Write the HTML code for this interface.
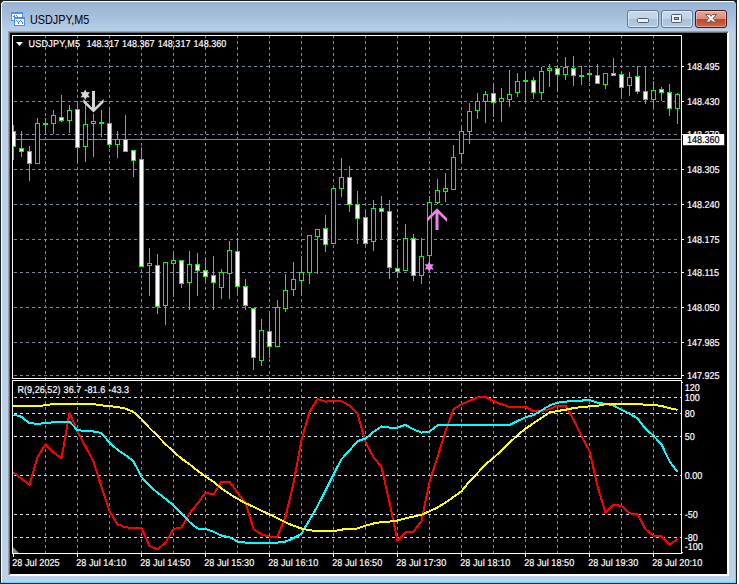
<!DOCTYPE html>
<html lang="en"><head><meta charset="utf-8"><title>USDJPY,M5</title>
<style>
html,body{margin:0;padding:0;background:#fff;}
body{width:739px;height:584px;position:relative;overflow:hidden;font-family:"Liberation Sans",Arial,sans-serif;}
.backdrop{position:absolute;left:0;top:0;width:737px;height:584px;background:#1b1b1b;}
.win{position:absolute;left:0;top:0;width:735px;height:582px;border:1px solid #1b1b1b;border-radius:5px 5px 0 0;background:#b9d1ea;overflow:hidden;}
.win .hl{position:absolute;left:0;top:0;right:0;bottom:0;border-top:1px solid #fff;border-left:1px solid #fff;border-right:1px solid #49e0ff;border-bottom:1px solid #49e0ff;border-radius:4px 4px 0 0;}
.titlebar{position:absolute;left:1px;top:1px;width:733px;height:30px;background:linear-gradient(#98b4d3 0%,#a6c0dd 50%,#b9d1ea 100%);}
.title{position:absolute;left:30.2px;top:13.1px;font-size:12.7px;line-height:14px;color:#000;white-space:nowrap;transform-origin:0 0;transform:scaleX(0.853);}
.client{position:absolute;left:8px;top:31px;width:717px;height:541px;background:#000;border-left:2px solid #a0a0a0;border-top:2px solid #a0a0a0;border-right:2px solid #fff;border-bottom:2px solid #fff;}
.client i{position:absolute;left:-1px;top:-1px;width:718px;height:542px;border-left:1px solid #696969;border-top:1px solid #696969;}
.btn{position:absolute;top:10px;width:30px;height:16px;border:1px solid #5f7590;border-radius:3px;background:linear-gradient(#c7d8ea 0%,#c1d3e7 48%,#a9c1dd 52%,#b4cae2 100%);box-shadow:inset 0 0 0 1px rgba(255,255,255,.55);}
.btn.close{border-color:#43161c;background:linear-gradient(#e9a99b 0%,#dd8b7a 48%,#c2432a 52%,#cf6a4b 100%);box-shadow:inset 0 0 0 1px rgba(255,255,255,.35);}
.btn svg{position:absolute;left:0;top:0;}
svg.chart{position:absolute;left:0;top:0;}
.icon{position:absolute;left:11px;top:12px;}
</style></head><body>
<div class="backdrop"></div>
<div class="win"><div class="titlebar"></div><div class="hl"></div></div>
<svg class="icon" width="16" height="16" viewBox="11 12 16 16" shape-rendering="crispEdges">
<rect x="11" y="12" width="12" height="9" fill="#4d8bf7"/>
<rect x="12" y="14" width="10" height="6" fill="#fff"/>
<path d="M13 16h2v1h-2z M14 15h1v1h-1z M16 15h1v1h-1z M17 16h1v1h-1z M18 17h1v1h-1z" fill="#3f7df0"/>
<rect x="14" y="17" width="11" height="9" fill="#4d8bf7"/>
<rect x="15" y="19" width="9" height="6" fill="#fff"/>
<path d="M16 20h1v1h-1z M17 21h1v1h-1z M18 22h1v2h-1z M19 21h1v1h-1z M20 20h1v1h-1z M21 21h1v1h-1z M22 22h1v2h-1z" fill="#3f7df0"/>
</svg>
<div class="title">USDJPY,M5</div>
<div class="btn" style="left:627px"><svg width="30" height="16" viewBox="0 0 30 16"><rect x="9.5" y="7.5" width="11" height="4" rx="1" fill="#f4f4f4" stroke="#4a5a70"/></svg></div>
<div class="btn" style="left:661px"><svg width="30" height="16" viewBox="0 0 30 16"><rect x="9.5" y="3.5" width="10" height="8" rx="1" fill="#f4f4f4" stroke="#4a5a70"/><rect x="12.5" y="6.5" width="4" height="2" fill="#9fb6d2" stroke="#4a5a70"/></svg></div>
<div class="btn close" style="left:695px"><svg width="30" height="16" viewBox="0 0 30 16"><path d="M9.500 3.500h4l1.500 1.800 1.500-1.800h4l-3.400 3.800 3.400 3.800h-4l-1.500-1.800-1.500 1.800h-4l3.400-3.800z" fill="#f6f6f6" stroke="#6a5358" stroke-width="1" stroke-linejoin="round"/></svg></div>
<div class="client"><i></i></div>
<svg class="chart" width="739" height="584" viewBox="0 0 739 584">
<defs><clipPath id="cm"><rect x="13" y="36" width="668" height="342"/></clipPath><clipPath id="cs"><rect x="13" y="381" width="668" height="172"/></clipPath></defs>
<g stroke="#778899" stroke-width="1" shape-rendering="crispEdges" fill="none">
<line x1="14" y1="66.5" x2="679" y2="66.5" stroke-dasharray="3 3"/>
<line x1="14" y1="101.5" x2="679" y2="101.5" stroke-dasharray="3 3"/>
<line x1="14" y1="134.5" x2="679" y2="134.5" stroke-dasharray="3 3"/>
<line x1="14" y1="169.5" x2="679" y2="169.5" stroke-dasharray="3 3"/>
<line x1="14" y1="204.5" x2="679" y2="204.5" stroke-dasharray="3 3"/>
<line x1="14" y1="239.5" x2="679" y2="239.5" stroke-dasharray="3 3"/>
<line x1="14" y1="272.5" x2="679" y2="272.5" stroke-dasharray="3 3"/>
<line x1="14" y1="307.5" x2="679" y2="307.5" stroke-dasharray="3 3"/>
<line x1="14" y1="342.5" x2="679" y2="342.5" stroke-dasharray="3 3"/>
<line x1="14" y1="375.5" x2="679" y2="375.5" stroke-dasharray="3 3"/>
<line x1="45.5" y1="36" x2="45.5" y2="378" stroke-dasharray="3 3" stroke-dashoffset="1"/>
<line x1="45.5" y1="381" x2="45.5" y2="553" stroke-dasharray="3 3" stroke-dashoffset="4"/>
<line x1="45.5" y1="379" x2="45.5" y2="380"/>
<line x1="77.5" y1="36" x2="77.5" y2="378" stroke-dasharray="3 3" stroke-dashoffset="1"/>
<line x1="77.5" y1="381" x2="77.5" y2="553" stroke-dasharray="3 3" stroke-dashoffset="4"/>
<line x1="77.5" y1="379" x2="77.5" y2="380"/>
<line x1="109.5" y1="36" x2="109.5" y2="378" stroke-dasharray="3 3" stroke-dashoffset="1"/>
<line x1="109.5" y1="381" x2="109.5" y2="553" stroke-dasharray="3 3" stroke-dashoffset="4"/>
<line x1="109.5" y1="379" x2="109.5" y2="380"/>
<line x1="141.5" y1="36" x2="141.5" y2="378" stroke-dasharray="3 3" stroke-dashoffset="1"/>
<line x1="141.5" y1="381" x2="141.5" y2="553" stroke-dasharray="3 3" stroke-dashoffset="4"/>
<line x1="141.5" y1="379" x2="141.5" y2="380"/>
<line x1="173.5" y1="36" x2="173.5" y2="378" stroke-dasharray="3 3" stroke-dashoffset="1"/>
<line x1="173.5" y1="381" x2="173.5" y2="553" stroke-dasharray="3 3" stroke-dashoffset="4"/>
<line x1="173.5" y1="379" x2="173.5" y2="380"/>
<line x1="205.5" y1="36" x2="205.5" y2="378" stroke-dasharray="3 3" stroke-dashoffset="1"/>
<line x1="205.5" y1="381" x2="205.5" y2="553" stroke-dasharray="3 3" stroke-dashoffset="4"/>
<line x1="205.5" y1="379" x2="205.5" y2="380"/>
<line x1="237.5" y1="36" x2="237.5" y2="378" stroke-dasharray="3 3" stroke-dashoffset="1"/>
<line x1="237.5" y1="381" x2="237.5" y2="553" stroke-dasharray="3 3" stroke-dashoffset="4"/>
<line x1="237.5" y1="379" x2="237.5" y2="380"/>
<line x1="269.5" y1="36" x2="269.5" y2="378" stroke-dasharray="3 3" stroke-dashoffset="1"/>
<line x1="269.5" y1="381" x2="269.5" y2="553" stroke-dasharray="3 3" stroke-dashoffset="4"/>
<line x1="269.5" y1="379" x2="269.5" y2="380"/>
<line x1="301.5" y1="36" x2="301.5" y2="378" stroke-dasharray="3 3" stroke-dashoffset="1"/>
<line x1="301.5" y1="381" x2="301.5" y2="553" stroke-dasharray="3 3" stroke-dashoffset="4"/>
<line x1="301.5" y1="379" x2="301.5" y2="380"/>
<line x1="333.5" y1="36" x2="333.5" y2="378" stroke-dasharray="3 3" stroke-dashoffset="1"/>
<line x1="333.5" y1="381" x2="333.5" y2="553" stroke-dasharray="3 3" stroke-dashoffset="4"/>
<line x1="333.5" y1="379" x2="333.5" y2="380"/>
<line x1="365.5" y1="36" x2="365.5" y2="378" stroke-dasharray="3 3" stroke-dashoffset="1"/>
<line x1="365.5" y1="381" x2="365.5" y2="553" stroke-dasharray="3 3" stroke-dashoffset="4"/>
<line x1="365.5" y1="379" x2="365.5" y2="380"/>
<line x1="397.5" y1="36" x2="397.5" y2="378" stroke-dasharray="3 3" stroke-dashoffset="1"/>
<line x1="397.5" y1="381" x2="397.5" y2="553" stroke-dasharray="3 3" stroke-dashoffset="4"/>
<line x1="397.5" y1="379" x2="397.5" y2="380"/>
<line x1="429.5" y1="36" x2="429.5" y2="378" stroke-dasharray="3 3" stroke-dashoffset="1"/>
<line x1="429.5" y1="381" x2="429.5" y2="553" stroke-dasharray="3 3" stroke-dashoffset="4"/>
<line x1="429.5" y1="379" x2="429.5" y2="380"/>
<line x1="461.5" y1="36" x2="461.5" y2="378" stroke-dasharray="3 3" stroke-dashoffset="1"/>
<line x1="461.5" y1="381" x2="461.5" y2="553" stroke-dasharray="3 3" stroke-dashoffset="4"/>
<line x1="461.5" y1="379" x2="461.5" y2="380"/>
<line x1="493.5" y1="36" x2="493.5" y2="378" stroke-dasharray="3 3" stroke-dashoffset="1"/>
<line x1="493.5" y1="381" x2="493.5" y2="553" stroke-dasharray="3 3" stroke-dashoffset="4"/>
<line x1="493.5" y1="379" x2="493.5" y2="380"/>
<line x1="525.5" y1="36" x2="525.5" y2="378" stroke-dasharray="3 3" stroke-dashoffset="1"/>
<line x1="525.5" y1="381" x2="525.5" y2="553" stroke-dasharray="3 3" stroke-dashoffset="4"/>
<line x1="525.5" y1="379" x2="525.5" y2="380"/>
<line x1="557.5" y1="36" x2="557.5" y2="378" stroke-dasharray="3 3" stroke-dashoffset="1"/>
<line x1="557.5" y1="381" x2="557.5" y2="553" stroke-dasharray="3 3" stroke-dashoffset="4"/>
<line x1="557.5" y1="379" x2="557.5" y2="380"/>
<line x1="589.5" y1="36" x2="589.5" y2="378" stroke-dasharray="3 3" stroke-dashoffset="1"/>
<line x1="589.5" y1="381" x2="589.5" y2="553" stroke-dasharray="3 3" stroke-dashoffset="4"/>
<line x1="589.5" y1="379" x2="589.5" y2="380"/>
<line x1="621.5" y1="36" x2="621.5" y2="378" stroke-dasharray="3 3" stroke-dashoffset="1"/>
<line x1="621.5" y1="381" x2="621.5" y2="553" stroke-dasharray="3 3" stroke-dashoffset="4"/>
<line x1="621.5" y1="379" x2="621.5" y2="380"/>
<line x1="653.5" y1="36" x2="653.5" y2="378" stroke-dasharray="3 3" stroke-dashoffset="1"/>
<line x1="653.5" y1="381" x2="653.5" y2="553" stroke-dasharray="3 3" stroke-dashoffset="4"/>
<line x1="653.5" y1="379" x2="653.5" y2="380"/>
<line x1="14" y1="397.5" x2="681" y2="397.5" stroke-dasharray="3 3" stroke="#dcdcdc"/>
<line x1="14" y1="413.5" x2="681" y2="413.5" stroke-dasharray="3 3" stroke="#dcdcdc"/>
<line x1="14" y1="436.5" x2="681" y2="436.5" stroke-dasharray="3 3" stroke="#dcdcdc"/>
<line x1="14" y1="475.5" x2="681" y2="475.5" stroke-dasharray="3 3" stroke="#dcdcdc"/>
<line x1="14" y1="514.5" x2="681" y2="514.5" stroke-dasharray="3 3" stroke="#dcdcdc"/>
<line x1="14" y1="537.5" x2="681" y2="537.5" stroke-dasharray="3 3" stroke="#dcdcdc"/>
<line x1="13" y1="139.5" x2="682" y2="139.5"/>
</g>
<g clip-path="url(#cm)" shape-rendering="crispEdges">
<rect x="13" y="125" width="1" height="35" fill="#00ff00"/>
<rect x="11" y="131" width="5" height="16" fill="#00ff00"/>
<rect x="12" y="132" width="3" height="14" fill="#fff"/>
<rect x="21" y="131" width="1" height="26" fill="#00ff00"/>
<rect x="19" y="148" width="5" height="4" fill="#00ff00"/>
<rect x="20" y="149" width="3" height="2" fill="#fff"/>
<rect x="29" y="146" width="1" height="35" fill="#00ff00"/>
<rect x="27" y="151" width="5" height="13" fill="#00ff00"/>
<rect x="28" y="152" width="3" height="11" fill="#fff"/>
<rect x="37" y="118" width="1" height="46" fill="#00ff00"/>
<rect x="35" y="123" width="5" height="41" fill="#00ff00"/>
<rect x="36" y="124" width="3" height="39" fill="#000"/>
<rect x="45" y="118" width="1" height="16" fill="#00ff00"/>
<rect x="43" y="123" width="5" height="2" fill="#00ff00"/>
<rect x="53" y="110" width="1" height="24" fill="#00ff00"/>
<rect x="51" y="115" width="5" height="9" fill="#00ff00"/>
<rect x="52" y="116" width="3" height="7" fill="#000"/>
<rect x="61" y="95" width="1" height="27" fill="#00ff00"/>
<rect x="59" y="117" width="5" height="4" fill="#00ff00"/>
<rect x="60" y="118" width="3" height="2" fill="#fff"/>
<rect x="69" y="105" width="1" height="28" fill="#00ff00"/>
<rect x="67" y="110" width="5" height="11" fill="#00ff00"/>
<rect x="68" y="111" width="3" height="9" fill="#000"/>
<rect x="77" y="104" width="1" height="58" fill="#00ff00"/>
<rect x="75" y="109" width="5" height="39" fill="#00ff00"/>
<rect x="76" y="110" width="3" height="37" fill="#fff"/>
<rect x="85" y="101" width="1" height="61" fill="#00ff00"/>
<rect x="83" y="124" width="5" height="23" fill="#00ff00"/>
<rect x="84" y="125" width="3" height="21" fill="#000"/>
<rect x="93" y="114" width="1" height="43" fill="#00ff00"/>
<rect x="91" y="121" width="5" height="3" fill="#00ff00"/>
<rect x="92" y="122" width="3" height="1" fill="#000"/>
<rect x="101" y="110" width="1" height="27" fill="#00ff00"/>
<rect x="99" y="122" width="5" height="2" fill="#00ff00"/>
<rect x="109" y="107" width="1" height="41" fill="#00ff00"/>
<rect x="107" y="123" width="5" height="22" fill="#00ff00"/>
<rect x="108" y="124" width="3" height="20" fill="#fff"/>
<rect x="117" y="131" width="1" height="27" fill="#00ff00"/>
<rect x="115" y="139" width="5" height="6" fill="#00ff00"/>
<rect x="116" y="140" width="3" height="4" fill="#000"/>
<rect x="125" y="115" width="1" height="37" fill="#00ff00"/>
<rect x="123" y="139" width="5" height="13" fill="#00ff00"/>
<rect x="124" y="140" width="3" height="11" fill="#fff"/>
<rect x="133" y="150" width="1" height="27" fill="#00ff00"/>
<rect x="131" y="150" width="5" height="11" fill="#00ff00"/>
<rect x="132" y="151" width="3" height="9" fill="#fff"/>
<rect x="141" y="147" width="1" height="120" fill="#00ff00"/>
<rect x="139" y="159" width="5" height="108" fill="#00ff00"/>
<rect x="140" y="160" width="3" height="106" fill="#fff"/>
<rect x="149" y="248" width="1" height="48" fill="#00ff00"/>
<rect x="147" y="263" width="5" height="3" fill="#00ff00"/>
<rect x="148" y="264" width="3" height="1" fill="#000"/>
<rect x="157" y="254" width="1" height="60" fill="#00ff00"/>
<rect x="155" y="265" width="5" height="42" fill="#00ff00"/>
<rect x="156" y="266" width="3" height="40" fill="#fff"/>
<rect x="165" y="262" width="1" height="63" fill="#00ff00"/>
<rect x="163" y="262" width="5" height="44" fill="#00ff00"/>
<rect x="164" y="263" width="3" height="42" fill="#000"/>
<rect x="173" y="254" width="1" height="43" fill="#00ff00"/>
<rect x="171" y="260" width="5" height="4" fill="#00ff00"/>
<rect x="172" y="261" width="3" height="2" fill="#000"/>
<rect x="181" y="260" width="1" height="28" fill="#00ff00"/>
<rect x="179" y="260" width="5" height="24" fill="#00ff00"/>
<rect x="180" y="261" width="3" height="22" fill="#fff"/>
<rect x="189" y="251" width="1" height="59" fill="#00ff00"/>
<rect x="187" y="264" width="5" height="19" fill="#00ff00"/>
<rect x="188" y="265" width="3" height="17" fill="#000"/>
<rect x="197" y="253" width="1" height="43" fill="#00ff00"/>
<rect x="195" y="264" width="5" height="7" fill="#00ff00"/>
<rect x="196" y="265" width="3" height="5" fill="#fff"/>
<rect x="205" y="258" width="1" height="23" fill="#00ff00"/>
<rect x="203" y="270" width="5" height="7" fill="#00ff00"/>
<rect x="204" y="271" width="3" height="5" fill="#fff"/>
<rect x="213" y="256" width="1" height="54" fill="#00ff00"/>
<rect x="211" y="275" width="5" height="8" fill="#00ff00"/>
<rect x="212" y="276" width="3" height="6" fill="#fff"/>
<rect x="221" y="269" width="1" height="30" fill="#00ff00"/>
<rect x="219" y="272" width="5" height="16" fill="#00ff00"/>
<rect x="220" y="273" width="3" height="14" fill="#000"/>
<rect x="229" y="241" width="1" height="58" fill="#00ff00"/>
<rect x="227" y="250" width="5" height="24" fill="#00ff00"/>
<rect x="228" y="251" width="3" height="22" fill="#000"/>
<rect x="237" y="238" width="1" height="55" fill="#00ff00"/>
<rect x="235" y="251" width="5" height="36" fill="#00ff00"/>
<rect x="236" y="252" width="3" height="34" fill="#fff"/>
<rect x="245" y="279" width="1" height="31" fill="#00ff00"/>
<rect x="243" y="286" width="5" height="20" fill="#00ff00"/>
<rect x="244" y="287" width="3" height="18" fill="#fff"/>
<rect x="253" y="308" width="1" height="62" fill="#00ff00"/>
<rect x="251" y="308" width="5" height="50" fill="#00ff00"/>
<rect x="252" y="309" width="3" height="48" fill="#fff"/>
<rect x="261" y="319" width="1" height="47" fill="#00ff00"/>
<rect x="259" y="330" width="5" height="31" fill="#00ff00"/>
<rect x="260" y="331" width="3" height="29" fill="#000"/>
<rect x="269" y="314" width="1" height="44" fill="#00ff00"/>
<rect x="267" y="331" width="5" height="16" fill="#00ff00"/>
<rect x="268" y="332" width="3" height="14" fill="#fff"/>
<rect x="277" y="300" width="1" height="47" fill="#00ff00"/>
<rect x="275" y="307" width="5" height="40" fill="#00ff00"/>
<rect x="276" y="308" width="3" height="38" fill="#000"/>
<rect x="285" y="274" width="1" height="38" fill="#00ff00"/>
<rect x="283" y="290" width="5" height="19" fill="#00ff00"/>
<rect x="284" y="291" width="3" height="17" fill="#000"/>
<rect x="293" y="262" width="1" height="34" fill="#00ff00"/>
<rect x="291" y="279" width="5" height="11" fill="#00ff00"/>
<rect x="292" y="280" width="3" height="9" fill="#000"/>
<rect x="301" y="256" width="1" height="40" fill="#00ff00"/>
<rect x="299" y="272" width="5" height="9" fill="#00ff00"/>
<rect x="300" y="273" width="3" height="7" fill="#000"/>
<rect x="309" y="235" width="1" height="49" fill="#00ff00"/>
<rect x="307" y="235" width="5" height="38" fill="#00ff00"/>
<rect x="308" y="236" width="3" height="36" fill="#000"/>
<rect x="317" y="229" width="1" height="45" fill="#00ff00"/>
<rect x="315" y="229" width="5" height="8" fill="#00ff00"/>
<rect x="316" y="230" width="3" height="6" fill="#000"/>
<rect x="325" y="215" width="1" height="37" fill="#00ff00"/>
<rect x="323" y="228" width="5" height="17" fill="#00ff00"/>
<rect x="324" y="229" width="3" height="15" fill="#fff"/>
<rect x="333" y="188" width="1" height="56" fill="#00ff00"/>
<rect x="331" y="188" width="5" height="56" fill="#00ff00"/>
<rect x="332" y="189" width="3" height="54" fill="#000"/>
<rect x="341" y="158" width="1" height="39" fill="#00ff00"/>
<rect x="339" y="177" width="5" height="12" fill="#00ff00"/>
<rect x="340" y="178" width="3" height="10" fill="#000"/>
<rect x="349" y="166" width="1" height="46" fill="#00ff00"/>
<rect x="347" y="177" width="5" height="28" fill="#00ff00"/>
<rect x="348" y="178" width="3" height="26" fill="#fff"/>
<rect x="357" y="191" width="1" height="53" fill="#00ff00"/>
<rect x="355" y="204" width="5" height="15" fill="#00ff00"/>
<rect x="356" y="205" width="3" height="13" fill="#fff"/>
<rect x="365" y="211" width="1" height="34" fill="#00ff00"/>
<rect x="363" y="217" width="5" height="27" fill="#00ff00"/>
<rect x="364" y="218" width="3" height="25" fill="#fff"/>
<rect x="373" y="200" width="1" height="51" fill="#00ff00"/>
<rect x="371" y="208" width="5" height="34" fill="#00ff00"/>
<rect x="372" y="209" width="3" height="32" fill="#000"/>
<rect x="381" y="196" width="1" height="43" fill="#00ff00"/>
<rect x="379" y="208" width="5" height="4" fill="#00ff00"/>
<rect x="380" y="209" width="3" height="2" fill="#fff"/>
<rect x="389" y="200" width="1" height="79" fill="#00ff00"/>
<rect x="387" y="211" width="5" height="57" fill="#00ff00"/>
<rect x="388" y="212" width="3" height="55" fill="#fff"/>
<rect x="397" y="249" width="1" height="29" fill="#00ff00"/>
<rect x="395" y="268" width="5" height="4" fill="#00ff00"/>
<rect x="396" y="269" width="3" height="2" fill="#fff"/>
<rect x="405" y="224" width="1" height="47" fill="#00ff00"/>
<rect x="403" y="238" width="5" height="33" fill="#00ff00"/>
<rect x="404" y="239" width="3" height="31" fill="#000"/>
<rect x="413" y="234" width="1" height="47" fill="#00ff00"/>
<rect x="411" y="238" width="5" height="38" fill="#00ff00"/>
<rect x="412" y="239" width="3" height="36" fill="#fff"/>
<rect x="421" y="238" width="1" height="46" fill="#00ff00"/>
<rect x="419" y="256" width="5" height="20" fill="#00ff00"/>
<rect x="420" y="257" width="3" height="18" fill="#000"/>
<rect x="429" y="196" width="1" height="67" fill="#00ff00"/>
<rect x="427" y="202" width="5" height="54" fill="#00ff00"/>
<rect x="428" y="203" width="3" height="52" fill="#000"/>
<rect x="437" y="179" width="1" height="25" fill="#00ff00"/>
<rect x="435" y="190" width="5" height="13" fill="#00ff00"/>
<rect x="436" y="191" width="3" height="11" fill="#000"/>
<rect x="445" y="173" width="1" height="29" fill="#00ff00"/>
<rect x="443" y="188" width="5" height="4" fill="#00ff00"/>
<rect x="444" y="189" width="3" height="2" fill="#000"/>
<rect x="453" y="145" width="1" height="45" fill="#00ff00"/>
<rect x="451" y="157" width="5" height="33" fill="#00ff00"/>
<rect x="452" y="158" width="3" height="31" fill="#000"/>
<rect x="461" y="127" width="1" height="34" fill="#00ff00"/>
<rect x="459" y="131" width="5" height="23" fill="#00ff00"/>
<rect x="460" y="132" width="3" height="21" fill="#000"/>
<rect x="469" y="103" width="1" height="41" fill="#00ff00"/>
<rect x="467" y="111" width="5" height="21" fill="#00ff00"/>
<rect x="468" y="112" width="3" height="19" fill="#000"/>
<rect x="477" y="93" width="1" height="26" fill="#00ff00"/>
<rect x="475" y="101" width="5" height="10" fill="#00ff00"/>
<rect x="476" y="102" width="3" height="8" fill="#000"/>
<rect x="485" y="91" width="1" height="32" fill="#00ff00"/>
<rect x="483" y="94" width="5" height="8" fill="#00ff00"/>
<rect x="484" y="95" width="3" height="6" fill="#000"/>
<rect x="493" y="84" width="1" height="33" fill="#00ff00"/>
<rect x="491" y="93" width="5" height="10" fill="#00ff00"/>
<rect x="492" y="94" width="3" height="8" fill="#fff"/>
<rect x="501" y="88" width="1" height="34" fill="#00ff00"/>
<rect x="499" y="98" width="5" height="4" fill="#00ff00"/>
<rect x="500" y="99" width="3" height="2" fill="#000"/>
<rect x="509" y="70" width="1" height="37" fill="#00ff00"/>
<rect x="507" y="94" width="5" height="6" fill="#00ff00"/>
<rect x="508" y="95" width="3" height="4" fill="#000"/>
<rect x="517" y="73" width="1" height="24" fill="#00ff00"/>
<rect x="515" y="81" width="5" height="12" fill="#00ff00"/>
<rect x="516" y="82" width="3" height="10" fill="#000"/>
<rect x="525" y="73" width="1" height="29" fill="#00ff00"/>
<rect x="523" y="80" width="5" height="2" fill="#00ff00"/>
<rect x="533" y="77" width="1" height="22" fill="#00ff00"/>
<rect x="531" y="80" width="5" height="13" fill="#00ff00"/>
<rect x="532" y="81" width="3" height="11" fill="#fff"/>
<rect x="541" y="67" width="1" height="33" fill="#00ff00"/>
<rect x="539" y="71" width="5" height="22" fill="#00ff00"/>
<rect x="540" y="72" width="3" height="20" fill="#000"/>
<rect x="549" y="64" width="1" height="23" fill="#00ff00"/>
<rect x="547" y="68" width="5" height="3" fill="#00ff00"/>
<rect x="548" y="69" width="3" height="1" fill="#000"/>
<rect x="557" y="65" width="1" height="27" fill="#00ff00"/>
<rect x="555" y="68" width="5" height="7" fill="#00ff00"/>
<rect x="556" y="69" width="3" height="5" fill="#fff"/>
<rect x="565" y="57" width="1" height="23" fill="#00ff00"/>
<rect x="563" y="67" width="5" height="8" fill="#00ff00"/>
<rect x="564" y="68" width="3" height="6" fill="#000"/>
<rect x="573" y="56" width="1" height="30" fill="#00ff00"/>
<rect x="571" y="68" width="5" height="8" fill="#00ff00"/>
<rect x="572" y="69" width="3" height="6" fill="#fff"/>
<rect x="581" y="66" width="1" height="19" fill="#00ff00"/>
<rect x="579" y="75" width="5" height="2" fill="#00ff00"/>
<rect x="589" y="69" width="1" height="13" fill="#00ff00"/>
<rect x="587" y="73" width="5" height="2" fill="#00ff00"/>
<rect x="597" y="64" width="1" height="20" fill="#00ff00"/>
<rect x="595" y="75" width="5" height="9" fill="#00ff00"/>
<rect x="596" y="76" width="3" height="7" fill="#fff"/>
<rect x="605" y="73" width="1" height="16" fill="#00ff00"/>
<rect x="603" y="73" width="5" height="12" fill="#00ff00"/>
<rect x="604" y="74" width="3" height="10" fill="#000"/>
<rect x="613" y="58" width="1" height="18" fill="#00ff00"/>
<rect x="611" y="73" width="5" height="3" fill="#00ff00"/>
<rect x="612" y="74" width="3" height="1" fill="#fff"/>
<rect x="621" y="71" width="1" height="28" fill="#00ff00"/>
<rect x="619" y="74" width="5" height="14" fill="#00ff00"/>
<rect x="620" y="75" width="3" height="12" fill="#fff"/>
<rect x="629" y="72" width="1" height="24" fill="#00ff00"/>
<rect x="627" y="77" width="5" height="9" fill="#00ff00"/>
<rect x="628" y="78" width="3" height="7" fill="#000"/>
<rect x="637" y="66" width="1" height="28" fill="#00ff00"/>
<rect x="635" y="76" width="5" height="16" fill="#00ff00"/>
<rect x="636" y="77" width="3" height="14" fill="#fff"/>
<rect x="645" y="67" width="1" height="37" fill="#00ff00"/>
<rect x="643" y="91" width="5" height="9" fill="#00ff00"/>
<rect x="644" y="92" width="3" height="7" fill="#fff"/>
<rect x="653" y="81" width="1" height="27" fill="#00ff00"/>
<rect x="651" y="90" width="5" height="10" fill="#00ff00"/>
<rect x="652" y="91" width="3" height="8" fill="#000"/>
<rect x="661" y="87" width="1" height="14" fill="#00ff00"/>
<rect x="659" y="89" width="5" height="4" fill="#00ff00"/>
<rect x="660" y="90" width="3" height="2" fill="#fff"/>
<rect x="669" y="84" width="1" height="32" fill="#00ff00"/>
<rect x="667" y="92" width="5" height="17" fill="#00ff00"/>
<rect x="668" y="93" width="3" height="15" fill="#fff"/>
<rect x="677" y="93" width="1" height="31" fill="#00ff00"/>
<rect x="675" y="94" width="5" height="15" fill="#00ff00"/>
<rect x="676" y="95" width="3" height="13" fill="#000"/>
</g>
<g clip-path="url(#cs)">
<polyline points="13.5,472.4 21.5,478.6 29.5,484.9 37.5,457.0 45.5,444.5 53.5,452.6 61.5,458.0 69.5,412.9 77.5,431.5 85.5,446.5 93.5,461.5 101.5,486.8 109.5,511.2 117.5,524.2 125.5,527.4 133.5,527.8 141.5,527.8 149.5,545.8 157.5,549.5 165.5,542.6 173.5,529.1 181.5,527.4 189.5,513.3 197.5,503.6 205.5,492.8 213.5,494.5 221.5,481.5 229.5,481.5 237.5,492.8 245.5,502.5 253.5,529.1 261.5,534.3 269.5,536.7 277.5,536.7 285.5,516.6 293.5,483.5 301.5,440.0 309.5,412.0 317.5,399.0 325.5,401.6 333.5,401.2 341.5,401.2 349.5,405.5 357.5,413.5 365.5,442.3 373.5,457.0 381.5,467.0 389.5,502.5 397.5,540.8 405.5,532.2 413.5,531.7 421.5,520.9 429.5,482.0 437.5,457.0 445.5,431.0 453.5,409.2 461.5,404.2 469.5,401.0 477.5,397.3 485.5,396.9 493.5,401.2 501.5,404.2 509.5,407.0 517.5,407.0 525.5,407.0 533.5,411.0 541.5,411.0 549.5,409.2 557.5,405.5 565.5,405.5 573.5,419.5 581.5,436.2 589.5,451.0 597.5,486.0 605.5,512.9 613.5,504.7 621.5,506.0 629.5,513.4 637.5,514.0 645.5,529.2 653.5,535.7 661.5,536.1 669.5,544.8 677.5,538.9" fill="none" stroke="#ff0000" stroke-width="2" stroke-linejoin="round" stroke-linecap="butt" shape-rendering="crispEdges"/>
<polyline points="13.5,414.6 21.5,416.8 29.5,423.3 37.5,423.7 45.5,423.3 53.5,422.2 61.5,421.8 69.5,421.8 77.5,430.2 85.5,430.9 93.5,431.5 101.5,433.0 109.5,442.7 117.5,449.8 125.5,455.1 133.5,461.3 141.5,477.0 149.5,485.9 157.5,492.7 165.5,498.8 173.5,505.3 181.5,513.3 189.5,522.0 197.5,528.5 205.5,529.1 213.5,531.7 221.5,535.6 229.5,537.1 237.5,541.5 245.5,542.6 253.5,542.6 261.5,542.6 269.5,542.6 277.5,542.6 285.5,541.5 293.5,538.2 301.5,533.7 309.5,519.8 317.5,506.2 325.5,490.5 333.5,474.3 341.5,459.1 349.5,450.4 357.5,441.2 365.5,438.5 373.5,431.9 381.5,426.5 389.5,427.6 397.5,427.6 405.5,424.8 413.5,429.4 421.5,432.6 429.5,431.5 437.5,425.5 445.5,425.0 453.5,425.0 461.5,425.0 469.5,425.0 477.5,425.0 485.5,425.0 493.5,425.0 501.5,425.0 509.5,425.0 517.5,421.1 525.5,417.2 533.5,415.1 541.5,410.3 549.5,405.5 557.5,402.7 565.5,401.6 573.5,401.0 581.5,400.6 589.5,399.9 597.5,402.7 605.5,403.8 613.5,405.5 621.5,409.9 629.5,413.5 637.5,418.5 645.5,428.7 653.5,435.8 661.5,444.5 669.5,461.2 677.5,472.0" fill="none" stroke="#00ffff" stroke-width="2" stroke-linejoin="round" stroke-linecap="butt" shape-rendering="crispEdges"/>
<polyline points="13.5,406.4 21.5,406.0 29.5,406.0 37.5,406.0 45.5,405.3 53.5,404.0 61.5,403.8 69.5,403.8 77.5,403.8 85.5,403.8 93.5,404.2 101.5,405.3 109.5,406.2 117.5,407.0 125.5,408.6 133.5,412.0 141.5,419.0 149.5,428.0 157.5,435.8 165.5,444.2 173.5,451.6 181.5,458.6 189.5,464.2 197.5,470.7 205.5,476.5 213.5,481.9 221.5,488.4 229.5,493.9 237.5,498.8 245.5,503.2 253.5,506.8 261.5,510.7 269.5,514.4 277.5,518.3 285.5,522.4 293.5,525.7 301.5,528.5 309.5,530.3 317.5,531.0 325.5,531.1 333.5,531.1 341.5,529.6 349.5,528.9 357.5,528.5 365.5,525.7 373.5,523.5 381.5,522.0 389.5,521.6 397.5,520.5 405.5,518.3 413.5,516.6 421.5,514.8 429.5,511.2 437.5,507.5 445.5,502.5 453.5,497.0 461.5,491.2 469.5,481.3 477.5,473.1 485.5,464.4 493.5,457.9 501.5,450.3 509.5,442.8 517.5,435.2 525.5,428.7 533.5,423.3 541.5,417.9 549.5,412.5 557.5,411.0 565.5,409.7 573.5,408.1 581.5,407.0 589.5,406.4 597.5,405.8 605.5,404.2 613.5,403.8 621.5,403.8 629.5,403.8 637.5,403.8 645.5,404.9 653.5,404.9 661.5,406.0 669.5,408.1 677.5,409.9" fill="none" stroke="#ffff00" stroke-width="2" stroke-linejoin="round" stroke-linecap="butt" shape-rendering="crispEdges"/>
</g>
<g fill="none" stroke="#fff" stroke-width="1" shape-rendering="crispEdges">
<rect x="12.5" y="35.5" width="669" height="343"/>
<path d="M12.5 553.5V380.5H681.5V553.5 M12 553.5H682 M682 552.5H683"/>
<line x1="682" y1="66.5" x2="684" y2="66.5"/>
<line x1="682" y1="101.5" x2="684" y2="101.5"/>
<line x1="682" y1="134.5" x2="684" y2="134.5"/>
<line x1="682" y1="169.5" x2="684" y2="169.5"/>
<line x1="682" y1="204.5" x2="684" y2="204.5"/>
<line x1="682" y1="239.5" x2="684" y2="239.5"/>
<line x1="682" y1="272.5" x2="684" y2="272.5"/>
<line x1="682" y1="307.5" x2="684" y2="307.5"/>
<line x1="682" y1="342.5" x2="684" y2="342.5"/>
<line x1="682" y1="375.5" x2="684" y2="375.5"/>
<line x1="682" y1="382.5" x2="683" y2="382.5"/>
<line x1="13.5" y1="554" x2="13.5" y2="557"/>
<line x1="77.5" y1="554" x2="77.5" y2="557"/>
<line x1="141.5" y1="554" x2="141.5" y2="557"/>
<line x1="205.5" y1="554" x2="205.5" y2="557"/>
<line x1="269.5" y1="554" x2="269.5" y2="557"/>
<line x1="333.5" y1="554" x2="333.5" y2="557"/>
<line x1="397.5" y1="554" x2="397.5" y2="557"/>
<line x1="461.5" y1="554" x2="461.5" y2="557"/>
<line x1="525.5" y1="554" x2="525.5" y2="557"/>
<line x1="589.5" y1="554" x2="589.5" y2="557"/>
<line x1="653.5" y1="554" x2="653.5" y2="557"/>
</g>
<path d="M13 547V553H19Z" fill="#778899"/>
<path d="M93.5 112.5L83.3 102.6V99L92 107.6V91H95V107.6L103.6 99V102.6Z" fill="#d8d8d8"/>
<path d="M437 208.2L447 218.2V222L438.5 213.5V230H435.5V213.5L427 222V218.2Z" fill="#ee82ee"/>
<polygon points="85.2,89.5 86.7,92.3 89.8,92.1 88.1,94.8 89.8,97.5 86.7,97.3 85.2,100.1 83.8,97.3 80.6,97.5 82.3,94.8 80.6,92.1 83.8,92.3" fill="#d8d8d8"/>
<polygon points="429.2,261.5 430.6,264.3 433.8,264.2 432.1,266.8 433.8,269.4 430.6,269.3 429.2,272.1 427.8,269.3 424.6,269.4 426.3,266.8 424.6,264.2 427.8,264.3" fill="#ee82ee"/>
<rect x="683" y="134" width="41" height="11" fill="#fff" shape-rendering="crispEdges"/>
<rect x="682" y="134" width="1" height="1" fill="#fff" shape-rendering="crispEdges"/>
<g font-family="&quot;Liberation Sans&quot;, Arial, sans-serif" font-size="10.0" fill="#fff" stroke="#fff" stroke-width="0.2">
<text transform="translate(687 70) rotate(0.05) scale(0.9050 1)">148.495</text>
<text transform="translate(687 105) rotate(0.05) scale(0.9050 1)">148.430</text>
<text transform="translate(687 138) rotate(0.05) scale(0.9050 1)">148.370</text>
<text transform="translate(687 173) rotate(0.05) scale(0.9050 1)">148.305</text>
<text transform="translate(687 208) rotate(0.05) scale(0.9050 1)">148.240</text>
<text transform="translate(687 243) rotate(0.05) scale(0.9050 1)">148.175</text>
<text transform="translate(687 276) rotate(0.05) scale(0.9050 1)">148.115</text>
<text transform="translate(687 311) rotate(0.05) scale(0.9050 1)">148.050</text>
<text transform="translate(687 346) rotate(0.05) scale(0.9050 1)">147.985</text>
<text transform="translate(687 379) rotate(0.05) scale(0.9050 1)">147.925</text>
<rect x="683" y="134" width="41" height="11" fill="#fff" shape-rendering="crispEdges"/>
<text transform="translate(687 143) rotate(0.05) scale(0.9050 1)" fill="#000" stroke="#000">148.360</text>
<text transform="translate(684.8 391) rotate(0.05) scale(0.9050 1)">120</text>
<text transform="translate(684.8 401) rotate(0.05) scale(0.9050 1)">100</text>
<text transform="translate(684.8 417) rotate(0.05) scale(0.9050 1)">80</text>
<text transform="translate(684.8 440) rotate(0.05) scale(0.9050 1)">50</text>
<text transform="translate(684.8 479) rotate(0.05) scale(0.9050 1)">0.00</text>
<text transform="translate(684.8 518) rotate(0.05) scale(0.9050 1)">-50</text>
<text transform="translate(684.8 541) rotate(0.05) scale(0.9050 1)">-80</text>
<text transform="translate(684.8 550) rotate(0.05) scale(0.9050 1)">-100</text>
<text transform="translate(28.4 47) rotate(0.05) scale(0.9050 1)" letter-spacing="0.3">USDJPY,M5</text>
<text transform="translate(86.4 47) rotate(0.05) scale(0.9050 1)">148.317</text>
<text transform="translate(122 47) rotate(0.05) scale(0.9050 1)">148.367</text>
<text transform="translate(157.8 47) rotate(0.05) scale(0.9050 1)">148.317</text>
<text transform="translate(193.6 47) rotate(0.05) scale(0.9050 1)">148.360</text>
<text transform="translate(17.4 393) rotate(0.05) scale(0.9050 1)" word-spacing="0.6" letter-spacing="0.05">R(9,26,52) 36.7 -81.6 -43.3</text>
<text transform="translate(12.2 566) rotate(0.05) scale(0.9050 1)" letter-spacing="0.08">28 Jul 2025</text>
<text transform="translate(76.2 566) rotate(0.05) scale(0.9050 1)" letter-spacing="0.08">28 Jul 14:10</text>
<text transform="translate(140.2 566) rotate(0.05) scale(0.9050 1)" letter-spacing="0.08">28 Jul 14:50</text>
<text transform="translate(204.2 566) rotate(0.05) scale(0.9050 1)" letter-spacing="0.08">28 Jul 15:30</text>
<text transform="translate(268.2 566) rotate(0.05) scale(0.9050 1)" letter-spacing="0.08">28 Jul 16:10</text>
<text transform="translate(332.2 566) rotate(0.05) scale(0.9050 1)" letter-spacing="0.08">28 Jul 16:50</text>
<text transform="translate(396.2 566) rotate(0.05) scale(0.9050 1)" letter-spacing="0.08">28 Jul 17:30</text>
<text transform="translate(460.2 566) rotate(0.05) scale(0.9050 1)" letter-spacing="0.08">28 Jul 18:10</text>
<text transform="translate(524.2 566) rotate(0.05) scale(0.9050 1)" letter-spacing="0.08">28 Jul 18:50</text>
<text transform="translate(588.2 566) rotate(0.05) scale(0.9050 1)" letter-spacing="0.08">28 Jul 19:30</text>
<text transform="translate(652.2 566) rotate(0.05) scale(0.9050 1)" letter-spacing="0.08">28 Jul 20:10</text>
</g>
<path d="M16 42H23L19.5 46Z" fill="#fff"/>
</svg>
</body></html>
